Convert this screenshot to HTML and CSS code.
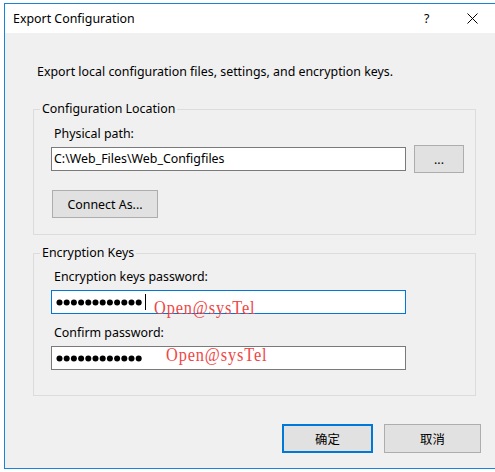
FILE: index.html
```html
<!DOCTYPE html>
<html lang="en">
<head>
<meta charset="utf-8">
<title>Export Configuration</title>
<link rel="stylesheet" href="styles.css">
</head>
<body>
<div class="desktop">
  <div class="dialog">
    <div class="titlebar">
      <span class="title">Export Configuration</span>
      <span class="help">?</span>
      <svg class="close" width="11" height="11" viewBox="0 0 11 11"><path d="M0.5 0.5 L10.5 10.5 M10.5 0.5 L0.5 10.5" stroke="#000" stroke-width="1" fill="none"/></svg>
    </div>
    <div class="content">
      <p class="intro">Export local configuration files, settings, and encryption keys.</p>

      <fieldset class="group group-location">
        <legend>Configuration Location</legend>
        <div class="label">Physical path:</div>
        <div class="path-row">
          <div class="field">C:\Web_Files\Web_Configfiles</div>
          <div class="btn btn-browse">...</div>
        </div>
        <div class="btn btn-connect">Connect As...</div>
      </fieldset>

      <fieldset class="group group-keys">
        <legend>Encryption Keys</legend>
        <div class="label">Encryption keys password:</div>
        <div class="field field-focus">
          <svg class="dots" width="87" height="7" viewBox="0 0 87 7"><g fill="#000"><circle cx="3.5" cy="3.5" r="3"/><circle cx="10.7" cy="3.5" r="3"/><circle cx="17.9" cy="3.5" r="3"/><circle cx="25.1" cy="3.5" r="3"/><circle cx="32.3" cy="3.5" r="3"/><circle cx="39.5" cy="3.5" r="3"/><circle cx="46.7" cy="3.5" r="3"/><circle cx="53.9" cy="3.5" r="3"/><circle cx="61.1" cy="3.5" r="3"/><circle cx="68.3" cy="3.5" r="3"/><circle cx="75.5" cy="3.5" r="3"/><circle cx="82.7" cy="3.5" r="3"/></g></svg><span class="caret"></span>
          <span class="stamp stamp-1">Open@sysTel</span>
        </div>
        <div class="label label-confirm">Confirm password:</div>
        <div class="field">
          <svg class="dots" width="87" height="7" viewBox="0 0 87 7"><g fill="#000"><circle cx="3.5" cy="3.5" r="3"/><circle cx="10.7" cy="3.5" r="3"/><circle cx="17.9" cy="3.5" r="3"/><circle cx="25.1" cy="3.5" r="3"/><circle cx="32.3" cy="3.5" r="3"/><circle cx="39.5" cy="3.5" r="3"/><circle cx="46.7" cy="3.5" r="3"/><circle cx="53.9" cy="3.5" r="3"/><circle cx="61.1" cy="3.5" r="3"/><circle cx="68.3" cy="3.5" r="3"/><circle cx="75.5" cy="3.5" r="3"/><circle cx="82.7" cy="3.5" r="3"/></g></svg>
          <span class="stamp stamp-2">Open@sysTel</span>
        </div>
      </fieldset>

      <div class="footer">
        <div class="btn btn-ok">确定</div>
        <div class="btn btn-cancel">取消</div>
      </div>
    </div>
  </div>
</div>
</body>
</html>
```

FILE: styles.css
```css
html, body {
  margin: 0;
  padding: 0;
  overflow: hidden;
  background: #ffffff;
}

body {
  font-family: "Noto Sans", "Noto Sans CJK SC", sans-serif;
  font-size: 12.4px;
  color: #000;
  width: 495px;
  height: 472px;
}

.desktop {
  padding: 3px 0 0 4px;
}

.dialog {
  width: 500px;
  height: 464px;
  border: 1px solid #1883d7;
  border-right: none;
  background: #f0f0f0;
  display: flex;
  flex-direction: column;
}

.titlebar {
  height: 29px;
  background: #ffffff;
  display: flex;
  align-items: center;
  padding-left: 8px;
  flex-shrink: 0;
}

.title {
  line-height: 16px;
  flex: 1;
}

.help {
  line-height: 16px;
  width: 10px;
  margin-right: 33px;
}

.close {
  margin-right: 27px;
}

.content {
  padding: 0 0 0 28px;
  display: flex;
  flex-direction: column;
}

.intro {
  margin: 31px 0 0 4px;
  line-height: 16px;
}

.group {
  margin: 21px 0 0 0;
  padding: 0 0 16px 0;
  width: 441px;
  border: 1px solid #dcdcdc;
  min-width: 0;
}

.group legend {
  margin-left: 6px;
  padding: 0 2px;
  line-height: 16px;
}

.label {
  line-height: 16px;
  margin: 9px 0 0 20px;
}

.path-row {
  display: flex;
  align-items: center;
  margin: 3px 0 0 17px;
  gap: 8px;
}

.field {
  position: relative;
  box-sizing: border-box;
  width: 355px;
  height: 24px;
  background: #fff;
  border: 1px solid #7a7a7a;
  line-height: 22px;
  padding-left: 2px;
  display: flex;
  align-items: center;
}

.group-keys .field {
  margin: 5px 0 0 17px;
}

.field-focus {
  border-color: #0078d7;
}

.btn {
  box-sizing: border-box;
  background: #e1e1e1;
  border: 1px solid #adadad;
  display: flex;
  align-items: center;
  justify-content: center;
  height: 28px;
}

.btn-browse {
  width: 50px;
}

.btn-connect {
  width: 106px;
  margin: 17px 0 0 18px;
}

.group-keys {
  margin-top: 10px;
  padding-bottom: 25px;
}

.group-keys .label {
  margin-top: 8px;
}

.group-keys .label-confirm {
  margin-top: 11px;
}

.dots {
  display: block;
  margin-left: 2px;
  flex-shrink: 0;
}

.caret {
  width: 1px;
  height: 16px;
  background: #000;
  margin-left: 2px;
}

.stamp {
  position: absolute;
  font-family: "Liberation Serif", serif;
  font-size: 19px;
  line-height: 19px;
  letter-spacing: 1px;
  color: #f04646;
  transform: scaleX(0.86);
  transform-origin: 0 0;
  white-space: nowrap;
}

.stamp-1 {
  left: 102px;
  top: 7px;
}

.stamp-2 {
  left: 114px;
  top: -2px;
}

.footer {
  display: flex;
  gap: 11px;
  margin: 28px 0 0 249px;
}

.btn-ok {
  width: 91px;
  height: 29px;
  border: 2px solid #0078d7;
}

.btn-cancel {
  width: 97px;
  height: 29px;
}
```
